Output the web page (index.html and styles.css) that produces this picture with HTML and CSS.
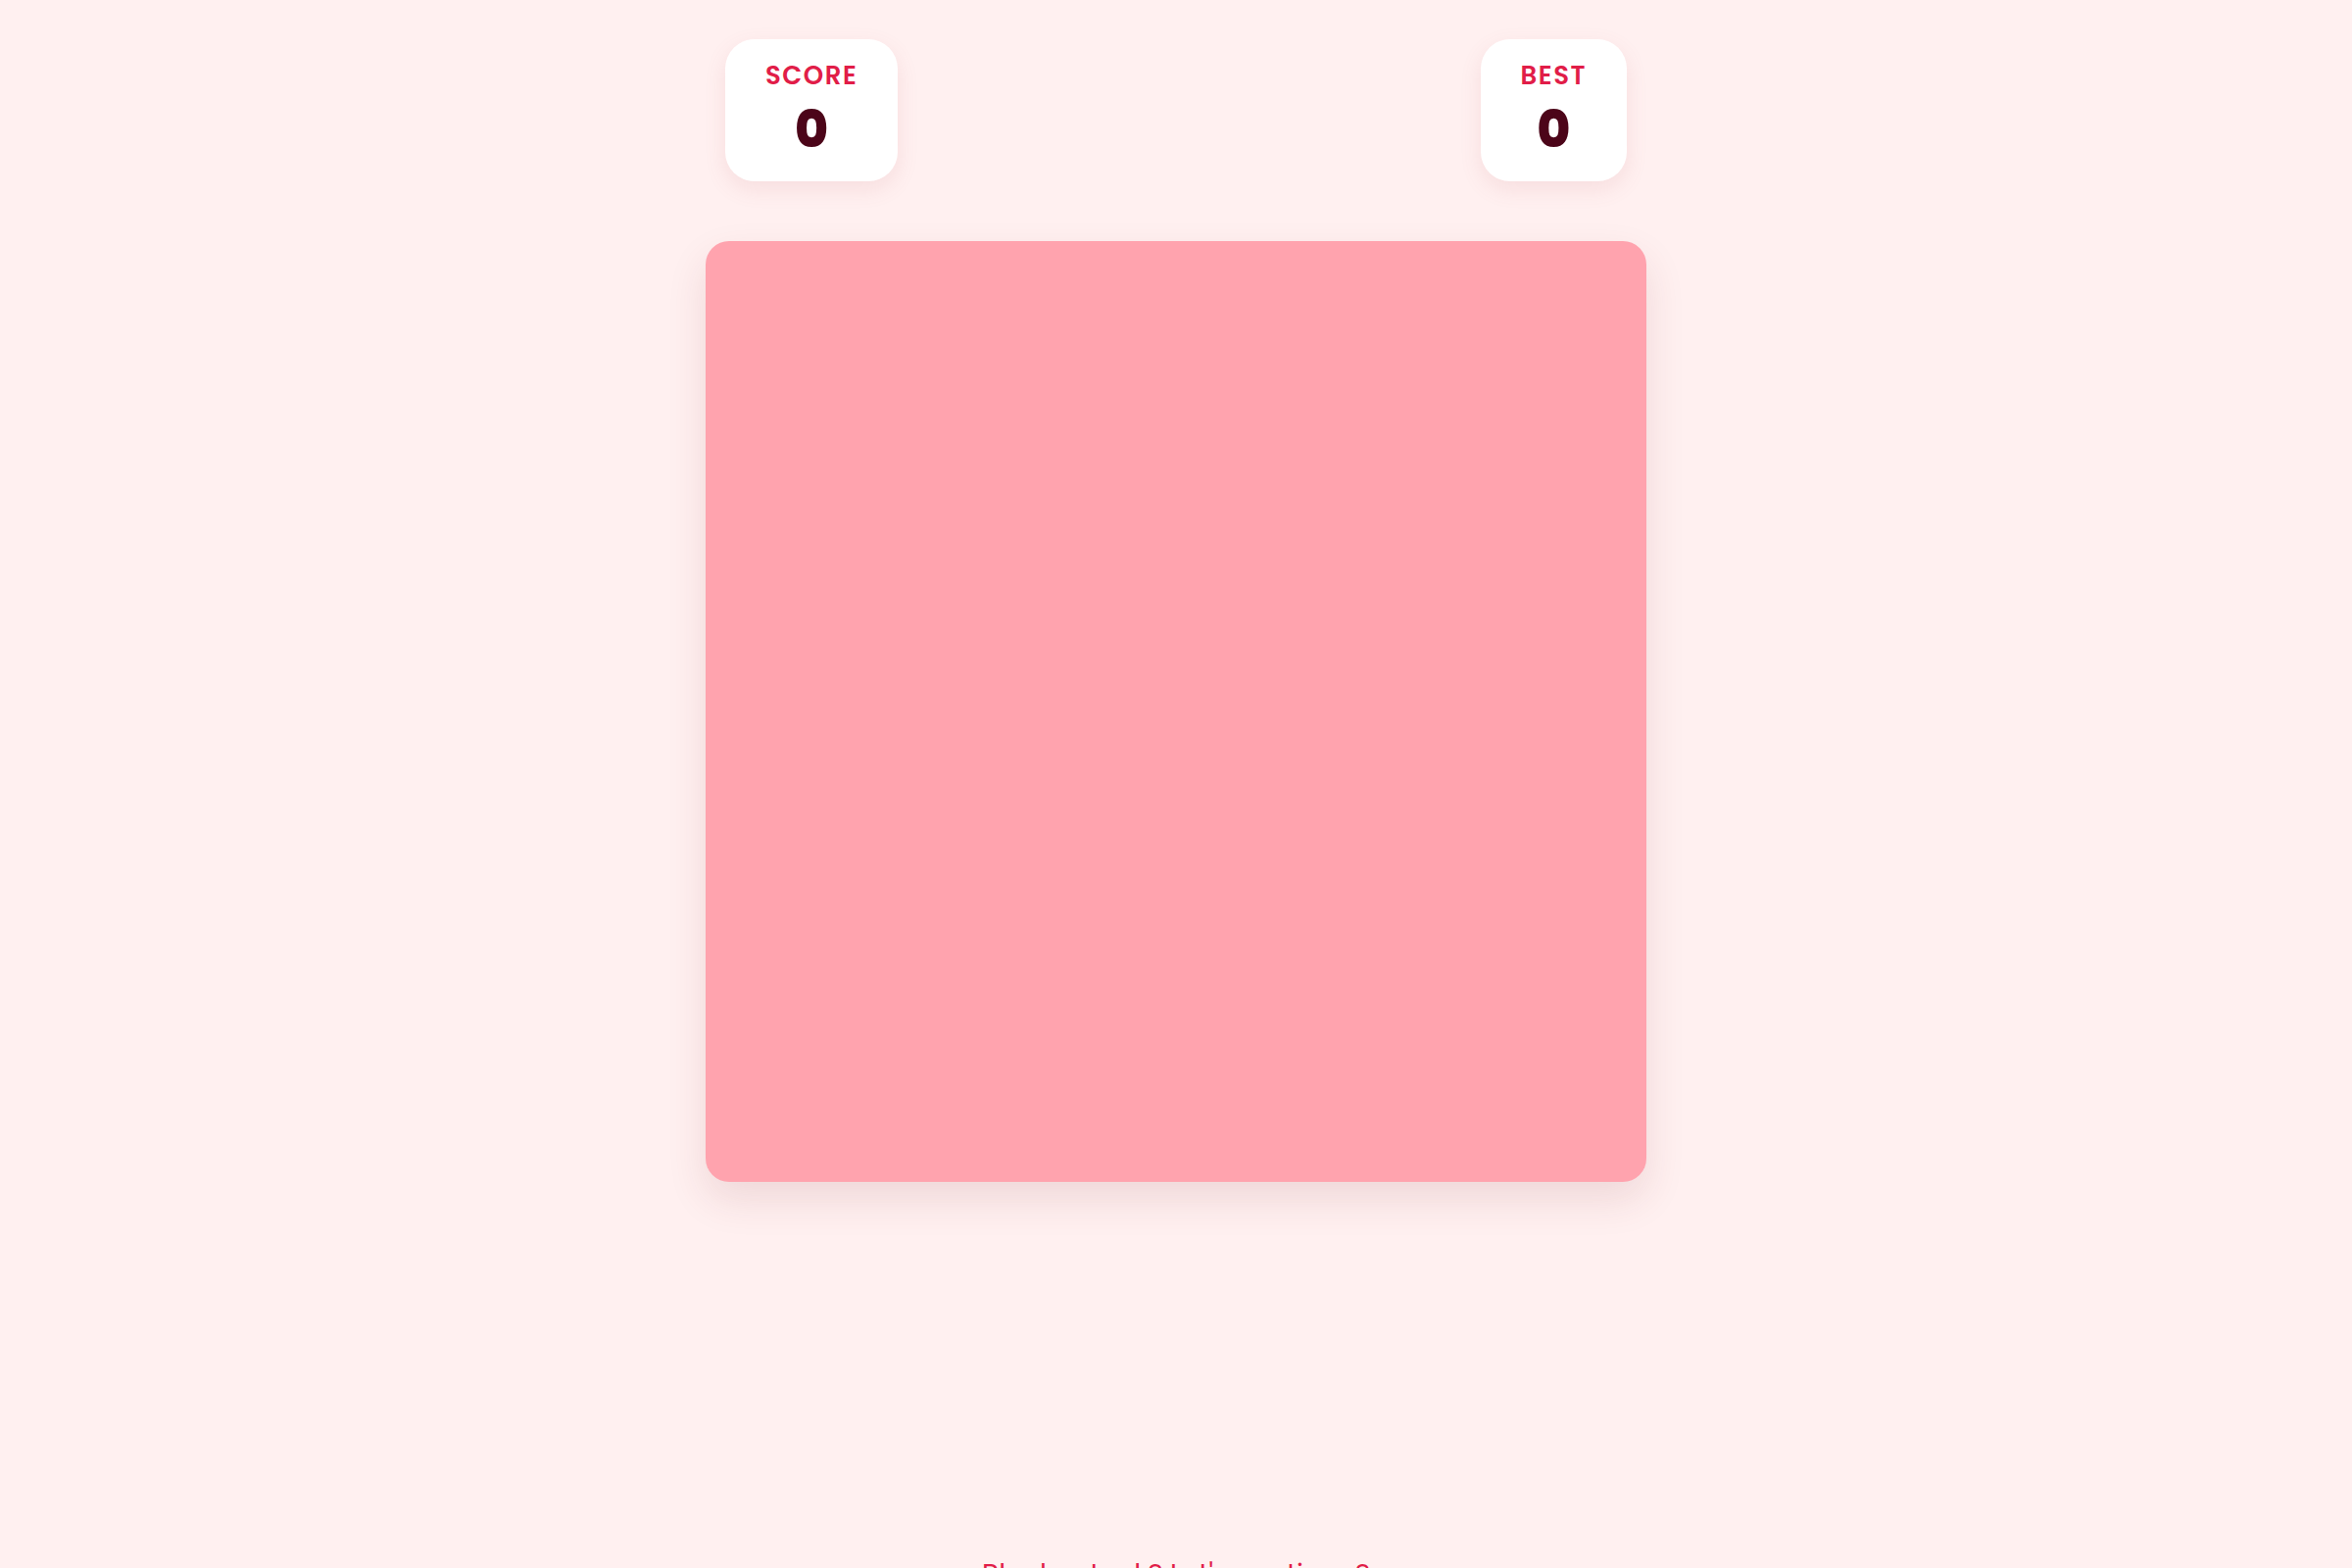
FILE: index.html
```html
<!DOCTYPE html>
<html lang="en">
<head>
  <meta charset="UTF-8" />
  <meta name="viewport" content="width=device-width, initial-scale=1.0" />
  <title>Blocks</title>
  <link rel="stylesheet" href="styles.css">
</head>
<body>

  <main class="game">
    <!-- Score header -->
    <div class="scores">
      <div class="score-box">
        <span class="score-label">SCORE</span>
        <span class="score-value" id="score">0</span>
      </div>
      <div class="score-box">
        <span class="score-label">BEST</span>
        <span class="score-value" id="best">0</span>
      </div>
    </div>

    <!-- Play area -->
    <div class="board" id="board"></div>

    <!-- Pieces waiting to be placed -->
    <div class="tray" id="tray"></div>

    <p class="hint">Blocks stuck? Let's continue?</p>
  </main>

</body>
</html>
```

FILE: styles.css
```css
body {
  font-family: 'Poppins', 'Inter', sans-serif;
  background-color: #fff0f0;
  margin: 0;
  overflow: hidden;
}

.game {
  width: 960px;
  margin: 0 auto;
  padding-top: 40px;
  display: flex;
  flex-direction: column;
  align-items: center;
}

.scores {
  width: 100%;
  box-sizing: border-box;
  padding: 0 20px;
  display: flex;
  justify-content: space-between;
}

.score-box {
  background-color: #fff;
  border-radius: 30px;
  padding: 19px 41px 21px;
  display: flex;
  flex-direction: column;
  align-items: center;
  box-shadow: 0 8px 22px rgba(190, 90, 100, 0.12);
}

.score-label {
  font-size: 26px;
  line-height: 36px;
  font-weight: 600;
  letter-spacing: 1.5px;
  color: #e11d48;
}

.score-value {
  margin-top: 5px;
  font-size: 52px;
  line-height: 64px;
  font-weight: 800;
  color: #4c0519;
}

.board {
  width: 960px;
  height: 960px;
  margin-top: 61px;
  background-color: #ffa3ae;
  border-radius: 24px;
  box-shadow: 0 18px 40px rgba(120, 40, 50, 0.12);
}

.tray {
  height: 340px;
}

.hint {
  margin: 40px 0 0;
  font-size: 28px;
  color: #e11d48;
}
```
